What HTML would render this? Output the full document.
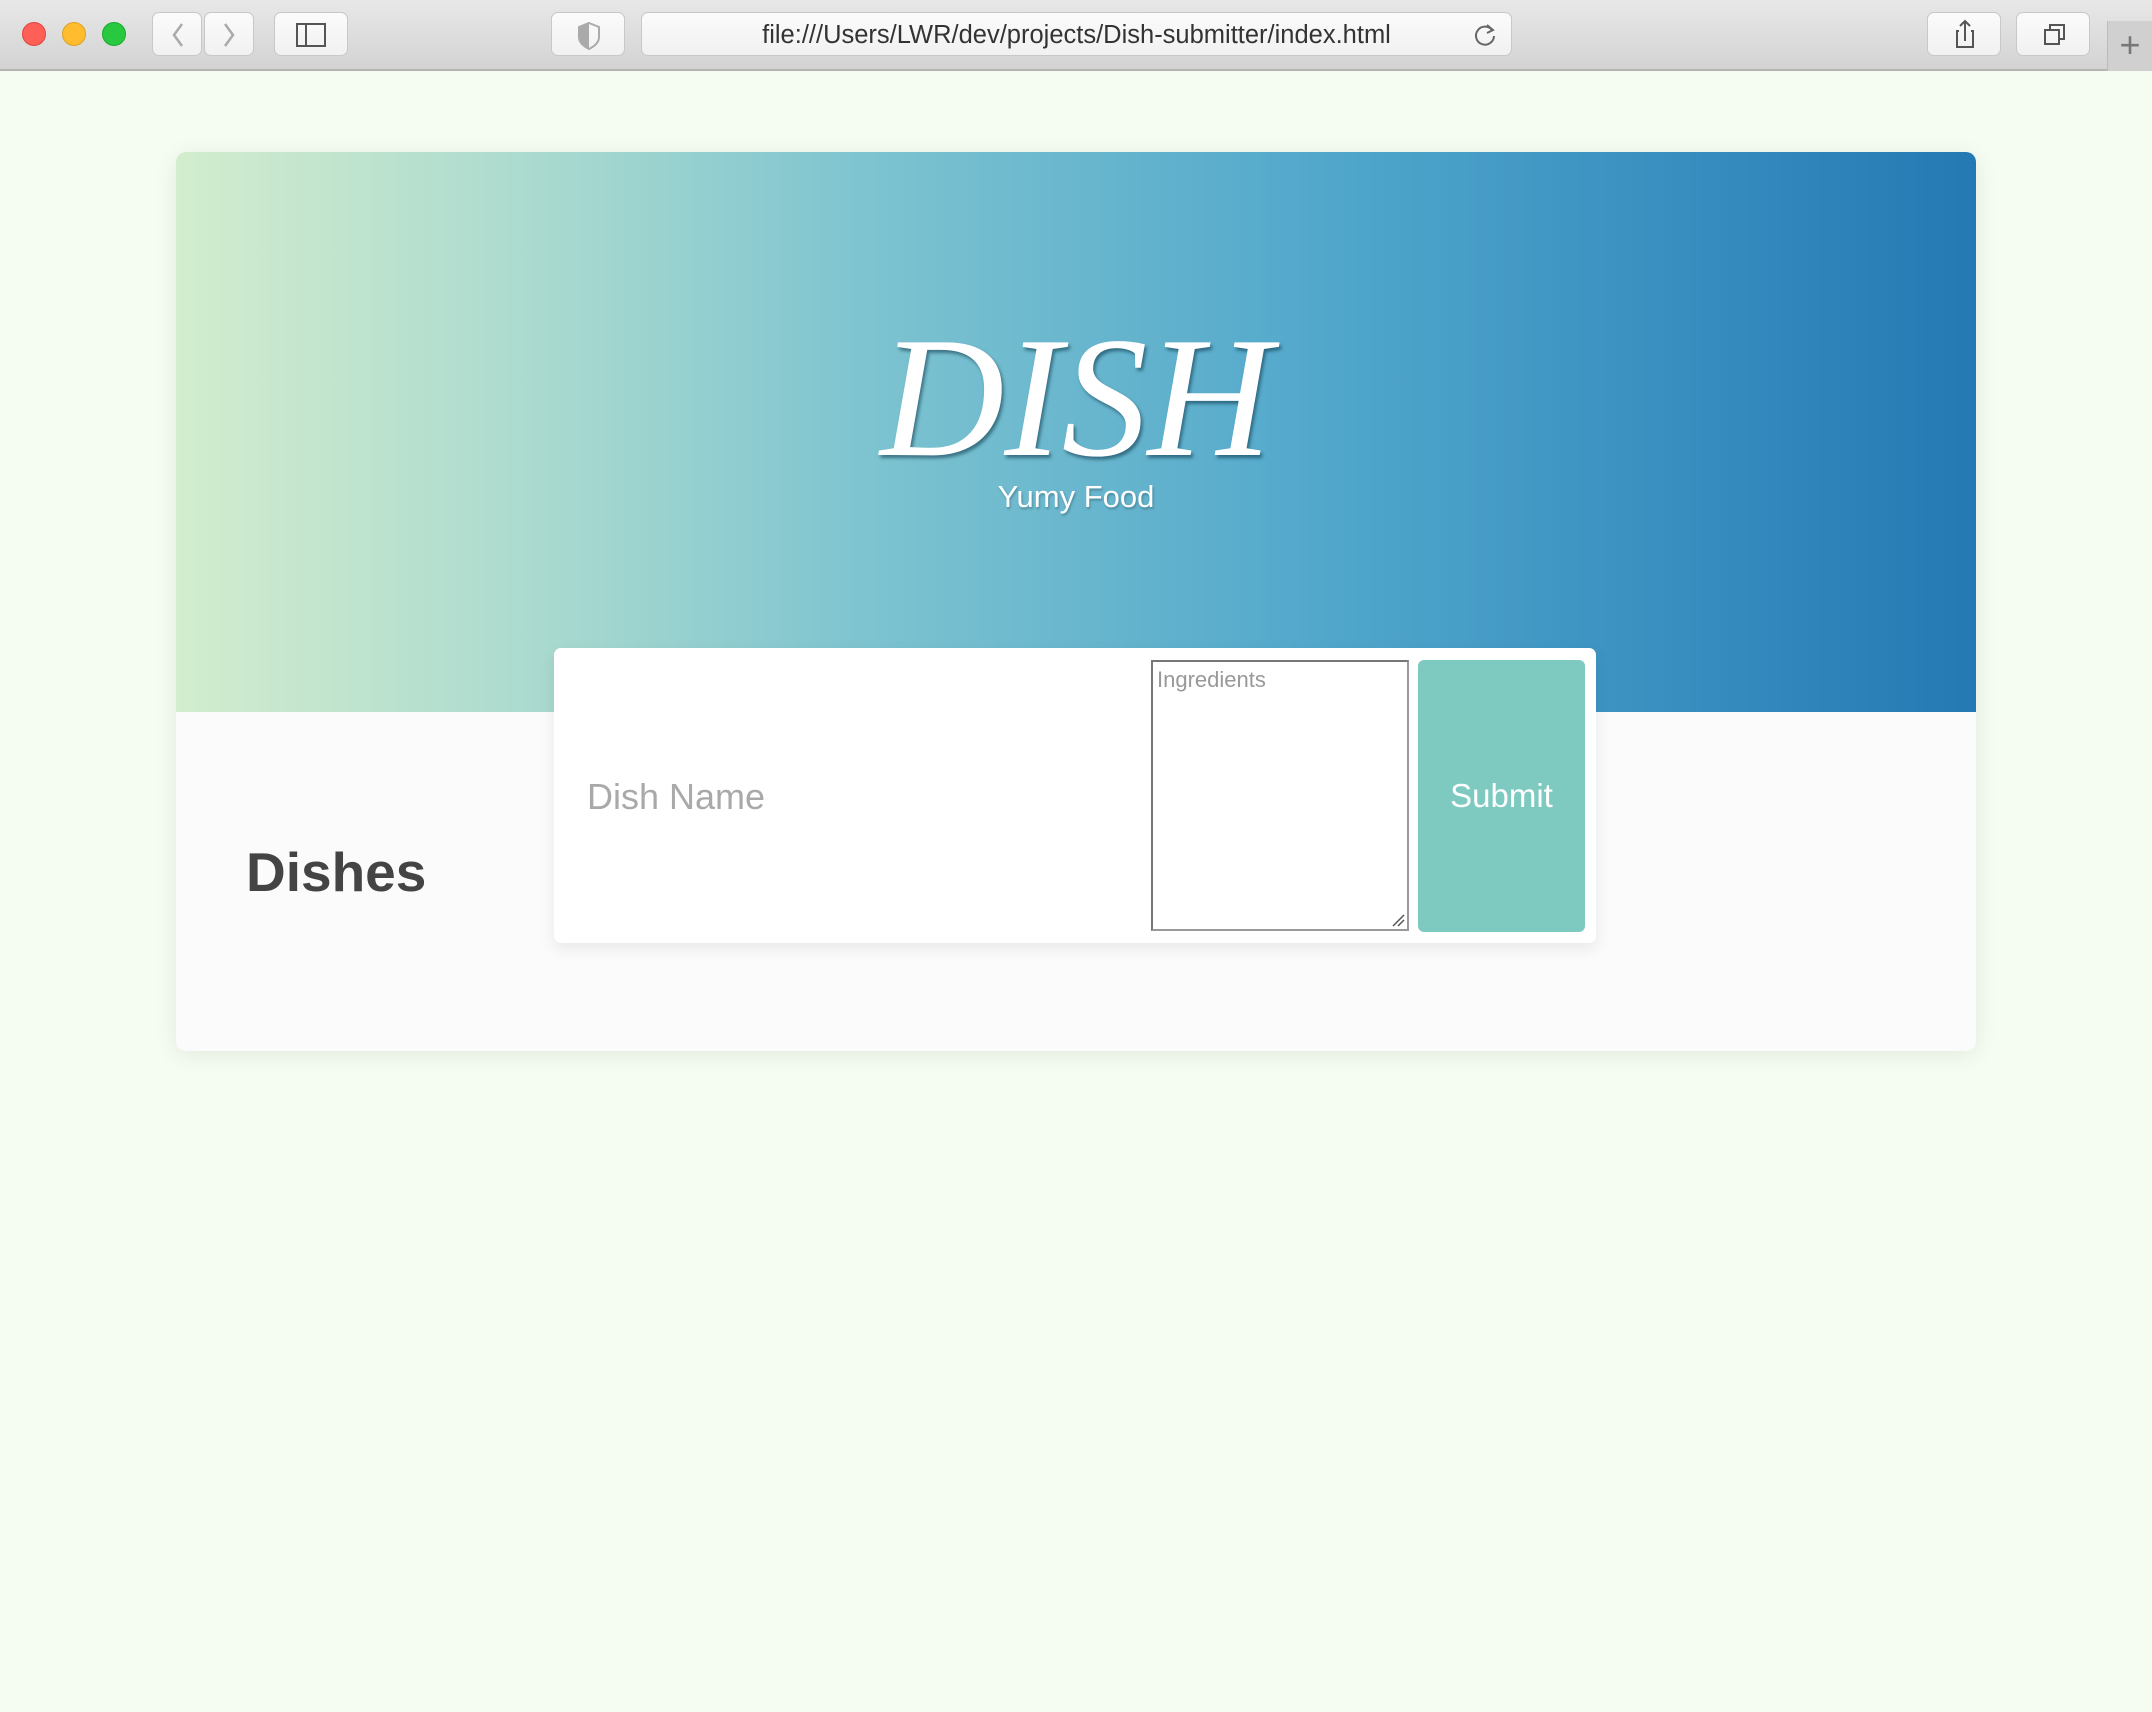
<!DOCTYPE html>
<html><head><meta charset="utf-8"><style>
*{box-sizing:border-box;margin:0;padding:0}
body{width:2152px;height:1712px;background:#f5fdf2;font-family:"Liberation Sans",sans-serif;position:relative;overflow:hidden}
.bar{position:absolute;left:0;top:0;width:2152px;height:71px;background:linear-gradient(#e8e8e8,#d3d3d3);border-bottom:2px solid #b5b5b5}
.btn{position:absolute;top:12px;height:44px;background:linear-gradient(#fbfbfb,#f1f1f1);border:1px solid #c8c8c8;border-radius:7px}
.dot{position:absolute;top:22px;width:24px;height:24px;border-radius:50%}
.card{position:absolute;left:176px;top:152px;width:1800px;height:899px;background:#fbfbfb;border-radius:10px;box-shadow:0 4px 24px rgba(0,0,0,.08);overflow:hidden}
.hdr{position:absolute;left:0;top:0;width:1800px;height:560px;background:linear-gradient(90deg,#d3edce 0%,#a6d8cf 22%,#7ec4d0 38%,#4fa6cb 65%,#2479b4 100%)}
.dish{position:absolute;left:0;width:1800px;text-align:center;top:148px;font-family:"Liberation Serif",serif;font-style:italic;font-size:172px;color:#fff;letter-spacing:0px;text-shadow:2px 3px 3px rgba(0,40,60,.5)}
.yum{position:absolute;left:0;width:1800px;text-align:center;top:327px;font-size:31px;color:#fff;text-shadow:1px 2px 2px rgba(0,0,0,.25)}
.form{position:absolute;left:554px;top:648px;width:1042px;height:295px;background:#fff;border-radius:7px;box-shadow:0 6px 16px rgba(0,0,0,.08)}
</style></head><body>
<div class="bar">
<div class="dot" style="left:22px;background:#fe5f57;border:1px solid #e0443e"></div>
<div class="dot" style="left:62px;background:#febc2e;border:1px solid #dea123"></div>
<div class="dot" style="left:102px;background:#28c840;border:1px solid #1aab29"></div>
<div class="btn" style="left:152px;width:50px"><svg width="50" height="44"><path d="M29 11 L21 22 L29 33" stroke="#aaa" stroke-width="2.5" fill="none"/></svg></div>
<div class="btn" style="left:204px;width:50px"><svg width="50" height="44"><path d="M20 11 L28 22 L20 33" stroke="#aaa" stroke-width="2.5" fill="none"/></svg></div>
<div class="btn" style="left:274px;width:74px"><svg width="74" height="44"><rect x="22" y="11" width="28" height="22" stroke="#555" stroke-width="2" fill="none"/><line x1="31" y1="11" x2="31" y2="33" stroke="#555" stroke-width="2"/></svg></div>
<div class="btn" style="left:551px;width:74px"><svg width="74" height="44"><path d="M37 10 L47 14 V24 Q47 31 37 36 Q27 31 27 24 V14 Z" stroke="#aaa" stroke-width="2" fill="none"/><path d="M37 10 L27 14 V24 Q27 31 37 36Z" fill="#aaa"/></svg></div>
<div class="btn" style="left:641px;width:871px;text-align:center;line-height:44px;font-size:25.5px;color:#333">file:///Users/LWR/dev/projects/Dish-submitter/index.html
<svg width="26" height="26" style="position:absolute;right:12px;top:9px"><path d="M19 8 A9 9 0 1 0 21 14" stroke="#666" stroke-width="2" fill="none"/><path d="M14 3 L20 8 L14 11" stroke="#666" stroke-width="2" fill="none"/></svg></div>
<div class="btn" style="left:1927px;width:74px"><svg width="74" height="44"><path d="M31 18 H29 V34 H45 V18 H43 M37 28 V8 M32 13 L37 8 L42 13" stroke="#555" stroke-width="2" fill="none"/></svg></div>
<div class="btn" style="left:2016px;width:74px"><svg width="74" height="44"><rect x="28" y="17" width="14" height="14" stroke="#555" stroke-width="2" fill="none"/><path d="M33 17 V12 H47 V26 H42" stroke="#555" stroke-width="2" fill="none"/></svg></div>
<div style="position:absolute;left:2107px;top:21px;width:45px;height:50px;border-left:1px solid #bbb;background:#d0d0d0;color:#777;font-size:36px;text-align:center;line-height:48px">+</div>
</div>
<div class="card">
<div class="hdr"><div class="dish">DISH</div><div class="yum">Yumy Food</div></div>
<div style="position:absolute;left:70px;top:688px;font-size:55px;font-weight:bold;color:#444">Dishes</div>
</div>
<div class="form">
<div style="position:absolute;left:33px;top:128px;font-size:36px;color:#a9a9a9">Dish Name</div>
<div style="position:absolute;left:597px;top:12px;width:258px;height:271px;border:2px solid #777;border-bottom-color:#999;border-right-color:#999;font-size:22px;color:#999;padding:5px 4px">Ingredients
<svg width="14" height="14" style="position:absolute;right:2px;bottom:2px"><path d="M2 13 L13 2 M7 13 L13 7" stroke="#555" stroke-width="1.5"/></svg></div>
<div style="position:absolute;left:864px;top:12px;width:167px;height:272px;background:#7ecac1;border-radius:6px;color:#fff;font-size:33px;text-align:center;line-height:272px">Submit</div>
</div>
</body></html>
